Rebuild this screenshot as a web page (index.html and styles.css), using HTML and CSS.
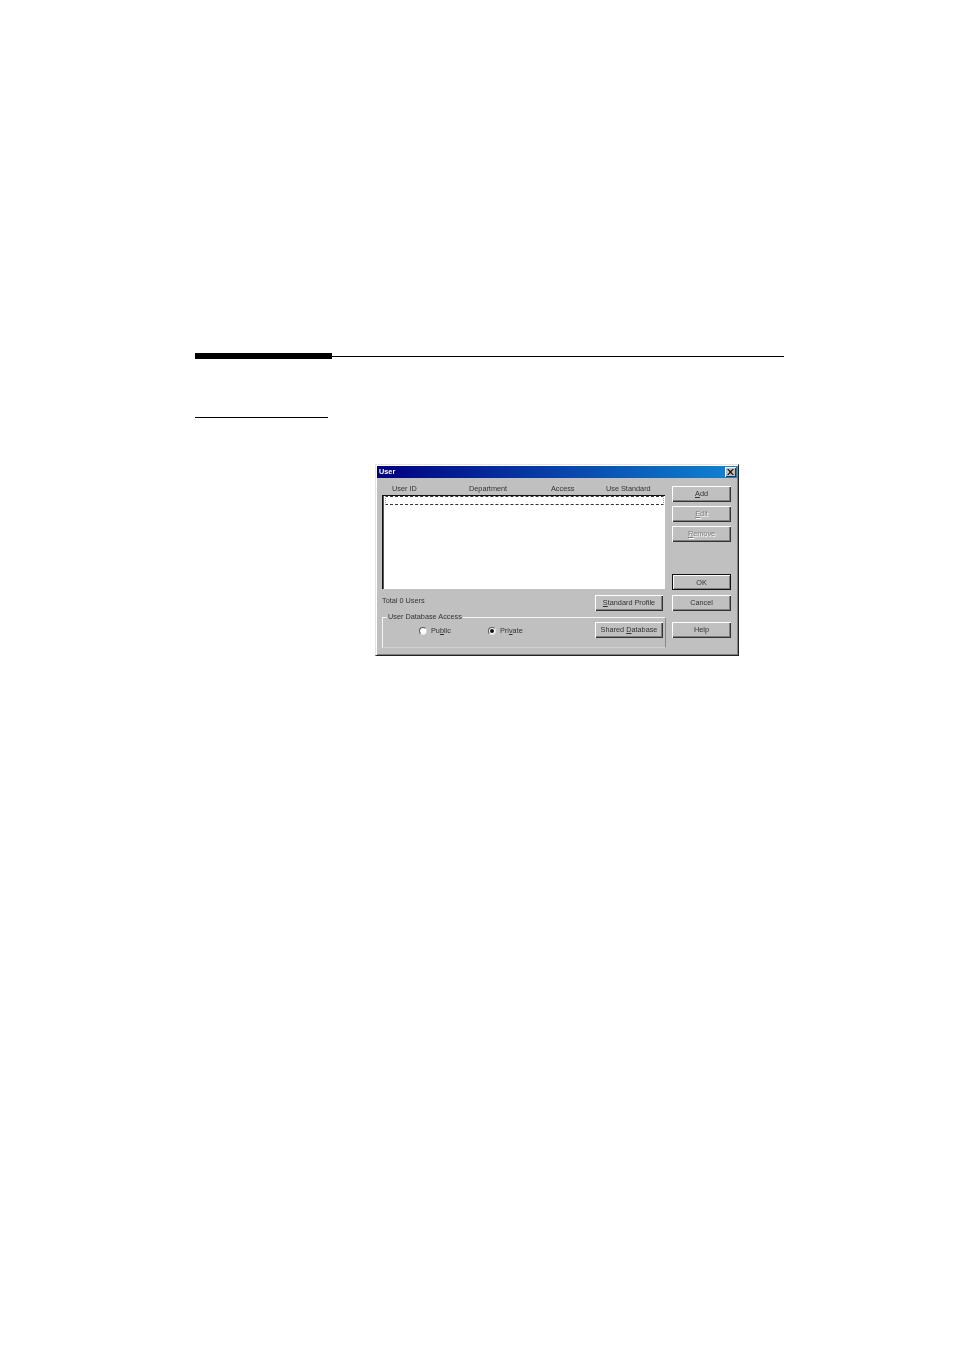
FILE: index.html
```html
<!DOCTYPE html>
<html lang="en">
<head>
    <meta charset="UTF-8">
    <title>User</title>
    <link rel="stylesheet" href="styles.css">
</head>
<body>
<div class="page">
    <div class="section-rule"><div class="section-rule-thick"></div></div>
    <div class="sub-rule"></div>

    <div class="dialog">
        <div class="titlebar">
            <span class="title">User</span>
            <span class="close">
                <svg width="7" height="6" viewBox="0 0 7 6"><path d="M0 0h1.500L3.500 2 5.500 0H7L4.300 3 7 6H5.500L3.500 4 1.500 6H0l2.700-3z" fill="#111"/></svg>
            </span>
        </div>
        <div class="dialog-body">
            <div class="main">
                <div class="columns">
                    <span class="col col-id">User ID</span>
                    <span class="col col-dept">Department</span>
                    <span class="col col-access">Access</span>
                    <span class="col col-std">Use Standard</span>
                </div>
                <div class="list"><div class="list-row"></div></div>
                <div class="status">
                    <span class="status-text">Total 0 Users</span>
                    <button class="btn btn-wide"><u>S</u>tandard Profile</button>
                </div>
                <fieldset class="group">
                    <legend>User Database Access</legend>
                    <div class="group-row">
                        <label class="radio radio-public"><span class="radio-mark"></span><span>Pu<u>b</u>lic</span></label>
                        <label class="radio"><span class="radio-mark checked"></span><span>Pri<u>v</u>ate</span></label>
                        <button class="btn btn-wide btn-shared">Shared <u>D</u>atabase</button>
                    </div>
                </fieldset>
            </div>
            <div class="side">
                <button class="btn"><u>A</u>dd</button>
                <button class="btn disabled gap-s"><u>E</u>dit</button>
                <button class="btn disabled gap-s"><u>R</u>emove</button>
                <button class="btn default gap-l">OK</button>
                <button class="btn gap-m">Cancel</button>
                <button class="btn gap-h">Help</button>
            </div>
        </div>
    </div>
</div>
</body>
</html>
```

FILE: styles.css
```css
body{
    margin:0;
    padding:0;
    background:#fff;
    font-family:"Liberation Sans", Arial, sans-serif;
    font-size:7.3px;
    color:#333;
}

.page{
    width:589px;
    height:998px;
    margin-left:195px;
    padding-top:353px;
}

.section-rule{
    height:6px;
    display:flex;
    align-items:center;
    background:linear-gradient(#000, #000) no-repeat 0 3px / 100% 1px;
}

.section-rule-thick{
    width:137px;
    height:6px;
    background:#000;
}

.sub-rule{
    width:133px;
    height:1px;
    margin-top:58px;
    background:#000;
}

.dialog{
    width:360px;
    height:188px;
    margin:46px 0 0 180px;
    padding:1px;
    background:#c0c0c0;
    border:1px solid;
    border-color:#e4e4e4 #222 #222 #e4e4e4;
    box-shadow:inset 1px 1px 0 #fff, inset -1px -1px 0 #808080;
    opacity:.995;
}

.titlebar{
    height:12px;
    box-sizing:border-box;
    display:flex;
    align-items:center;
    justify-content:space-between;
    padding:0 1px 0 2px;
    background:linear-gradient(90deg, #000080, #1084d0);
}

.title{
    margin-bottom:2px;
    color:#fff;
    font-weight:bold;
}

.close{
    width:11px;
    height:10px;
    display:flex;
    align-items:center;
    justify-content:center;
    background:#c0c0c0;
    box-shadow:inset 1px 1px 0 #fff, inset -1px -1px 0 #333;
}

.dialog-body{
    display:flex;
}

.main{
    width:284px;
    margin-left:5px;
}

.columns{
    height:13px;
    box-sizing:border-box;
    margin-top:4px;
    display:flex;
    align-items:center;
}

.col-id{
    margin-left:10px;
    width:77px;
}

.col-dept{
    width:82px;
}

.col-access{
    width:55px;
}

.list{
    width:283px;
    height:94px;
    box-sizing:border-box;
    padding:0 1px 0 2px;
    background:#fff;
    border-top:1px solid #111;
    border-left:1px solid #111;
    box-shadow:inset 1px 0 0 #555;
}

.list-row{
    height:7px;
    border:1px dashed #333;
    border-left:1px dotted #999;
    border-right:1px dotted #999;
}

.status{
    height:16px;
    margin-top:6px;
    padding-right:3px;
    display:flex;
    align-items:center;
    justify-content:space-between;
}

.status-text{
    margin-bottom:6px;
}

.group{
    height:36px;
    box-sizing:border-box;
    margin:1px 0 0;
    padding:0 2px 0 36px;
    min-width:0;
    border:1px solid #f4f4f4;
    border-bottom-color:#d0d0d0;
    border-right-color:#888;
}

.group legend{
    height:10px;
    line-height:10px;
    margin-left:-32px;
    padding:0 1px;
}

.group-row{
    display:flex;
    align-items:flex-start;
}

.radio{
    height:16px;
    padding-top:1px;
    box-sizing:border-box;
    width:69px;
    display:flex;
    align-items:center;
    gap:4px;
}

.radio-mark{
    width:8px;
    height:8px;
    box-sizing:border-box;
    border-radius:50%;
    background:#fff;
    border:1px solid;
    border-color:#555 #ddd #ddd #555;
    display:flex;
    align-items:center;
    justify-content:center;
}

.radio-mark.checked::after{
    content:"";
    width:4px;
    height:4px;
    border-radius:50%;
    background:#111;
}

.btn{
    display:block;
    width:59px;
    height:16px;
    box-sizing:border-box;
    margin:0;
    padding:0 0 2px;
    font:inherit;
    color:inherit;
    background:#c0c0c0;
    border:0;
    box-shadow:inset 1px 1px 0 #fff, inset -1px -1px 0 #333, inset -2px -2px 0 #808080;
}

.btn-wide{
    width:68px;
}

.btn-shared{
    margin-left:auto;
}

.disabled{
    color:#808080;
    text-shadow:1px 1px 0 #fff;
}

.default{
    padding:0;
    box-shadow:inset 0 0 0 1px #111, inset 2px 2px 0 #fff, inset -2px -2px 0 #808080;
}

.side{
    margin:8px 0 0 6px;
}

.gap-s{
    margin-top:4px;
}

.gap-l{
    margin-top:32px;
}

.gap-m{
    margin-top:5px;
}

.gap-h{
    margin-top:11px;
}
```
